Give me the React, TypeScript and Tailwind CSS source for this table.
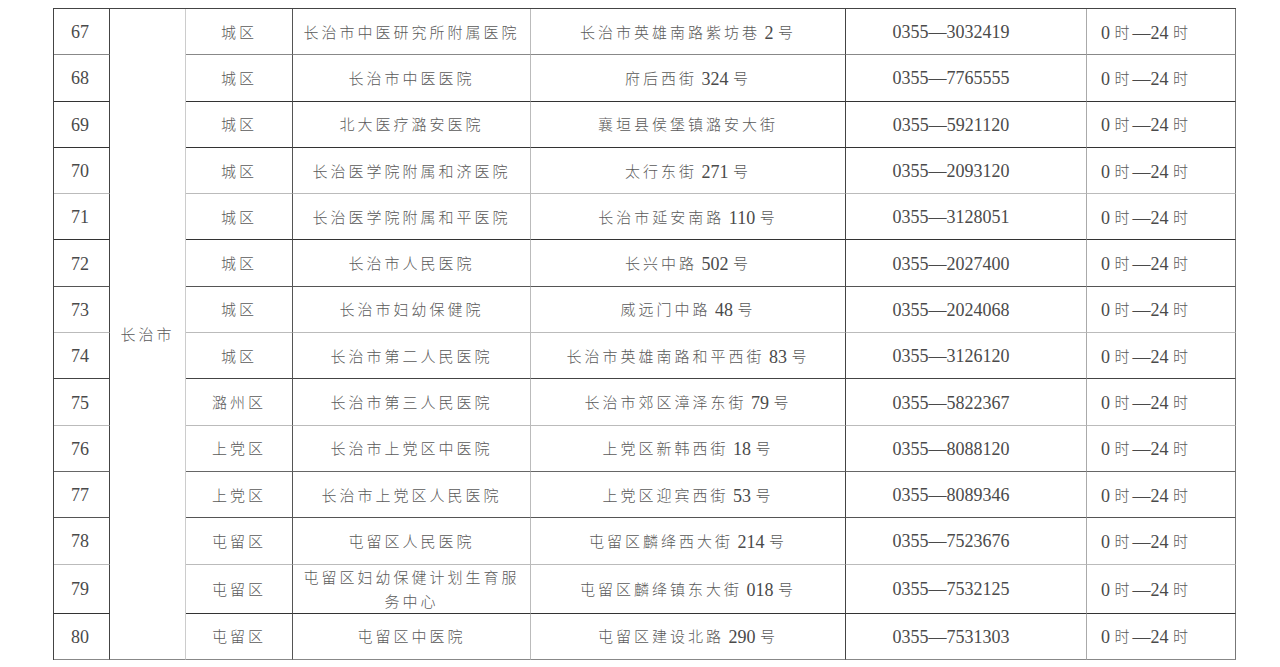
import React from "react";

type Row = {
  no: string;
  district: string;
  name: string;
  addr: string;
  phone: string;
  line: string;
};

const rows: Row[] = [
  { no: "67", district: "城区", name: "长治市中医研究所附属医院", addr: "长治市英雄南路紫坊巷 2 号", phone: "0355—3032419", line: "border-b-[#888]" },
  { no: "68", district: "城区", name: "长治市中医医院", addr: "府后西街 324 号", phone: "0355—7765555", line: "border-b-[#333]" },
  { no: "69", district: "城区", name: "北大医疗潞安医院", addr: "襄垣县侯堡镇潞安大街", phone: "0355—5921120", line: "border-b-[#333]" },
  { no: "70", district: "城区", name: "长治医学院附属和济医院", addr: "太行东街 271 号", phone: "0355—2093120", line: "border-b-[#bbb]" },
  { no: "71", district: "城区", name: "长治医学院附属和平医院", addr: "长治市延安南路 110 号", phone: "0355—3128051", line: "border-b-[#333]" },
  { no: "72", district: "城区", name: "长治市人民医院", addr: "长兴中路 502 号", phone: "0355—2027400", line: "border-b-[#555]" },
  { no: "73", district: "城区", name: "长治市妇幼保健院", addr: "威远门中路 48 号", phone: "0355—2024068", line: "border-b-[#bbb]" },
  { no: "74", district: "城区", name: "长治市第二人民医院", addr: "长治市英雄南路和平西街 83 号", phone: "0355—3126120", line: "border-b-[#444]" },
  { no: "75", district: "潞州区", name: "长治市第三人民医院", addr: "长治市郊区漳泽东街 79 号", phone: "0355—5822367", line: "border-b-[#bbb]" },
  { no: "76", district: "上党区", name: "长治市上党区中医院", addr: "上党区新韩西街 18 号", phone: "0355—8088120", line: "border-b-[#666]" },
  { no: "77", district: "上党区", name: "长治市上党区人民医院", addr: "上党区迎宾西街 53 号", phone: "0355—8089346", line: "border-b-[#555]" },
  { no: "78", district: "屯留区", name: "屯留区人民医院", addr: "屯留区麟绛西大街 214 号", phone: "0355—7523676", line: "border-b-[#bbb]" },
  { no: "79", district: "屯留区", name: "屯留区妇幼保健计划生育服务中心", addr: "屯留区麟绛镇东大街 018 号", phone: "0355—7532125", line: "border-b-[#333]" },
  { no: "80", district: "屯留区", name: "屯留区中医院", addr: "屯留区建设北路 290 号", phone: "0355—7531303", line: "border-b-[#888]" },
];

// split text into CJK runs (spaced out, like the printed document) and latin/digit runs
function Txt({ s }: { s: string }) {
  const parts = s.match(/[\u4e00-\u9fff]+|[^\u4e00-\u9fff]+/g) || [];
  return (
    <>
      {parts.map((p, i) =>
        /[\u4e00-\u9fff]/.test(p) ? (
          <span key={i} className="text-[15px] tracking-[3px] text-[#5a5a5a] [font-family:'Noto_Sans_CJK_SC',sans-serif] font-light">
            {p}
          </span>
        ) : (
          <span key={i} className="relative top-px text-[18px] whitespace-pre [font-family:'Liberation_Serif',serif]">
            {p}
          </span>
        )
      )}
    </>
  );
}

const td = "h-[46.3px] p-0 px-2 text-center align-middle border-b";

export default function App() {
  return (
    <main className="min-h-screen bg-white pt-2">
      <table className="ml-[53px] w-[1182px] table-fixed border-separate border-spacing-0 border-t border-l border-t-[#444] border-l-[#444] text-[#4a4a4a] leading-[23px]">
        <colgroup>
          <col className="w-[56px]" />
          <col className="w-[76px]" />
          <col className="w-[107px]" />
          <col className="w-[238px]" />
          <col className="w-[315px]" />
          <col className="w-[241px]" />
          <col className="w-[149px]" />
        </colgroup>
        <tbody>
          {rows.map((r, i) => (
            <tr key={r.no}>
              <td className={`${td} ${r.line} border-r border-r-[#444] pr-[11px]`}>
                <Txt s={r.no} />
              </td>
              {i === 0 && (
                <td rowSpan={14} className="p-0 text-center align-middle border-r border-b border-r-[#ccc] border-b-[#888]">
                  <Txt s="长治市" />
                </td>
              )}
              <td className={`${td} ${r.line} border-r border-r-[#555]`}>
                <Txt s={r.district} />
              </td>
              <td className={`${td} ${r.line} border-r border-r-[#bbb] px-[10px]`}>
                <Txt s={r.name} />
              </td>
              <td className={`${td} ${r.line} border-r border-r-[#444]`}>
                <Txt s={r.addr} />
              </td>
              <td className={`${td} ${r.line} border-r border-r-[#aaa] pr-[38px]`}>
                <Txt s={r.phone} />
              </td>
              <td className={`${td} ${r.line} border-r border-r-[#777] pr-[38px]`}>
                <Txt s="0 时—24 时" />
              </td>
            </tr>
          ))}
        </tbody>
      </table>
    </main>
  );
}
